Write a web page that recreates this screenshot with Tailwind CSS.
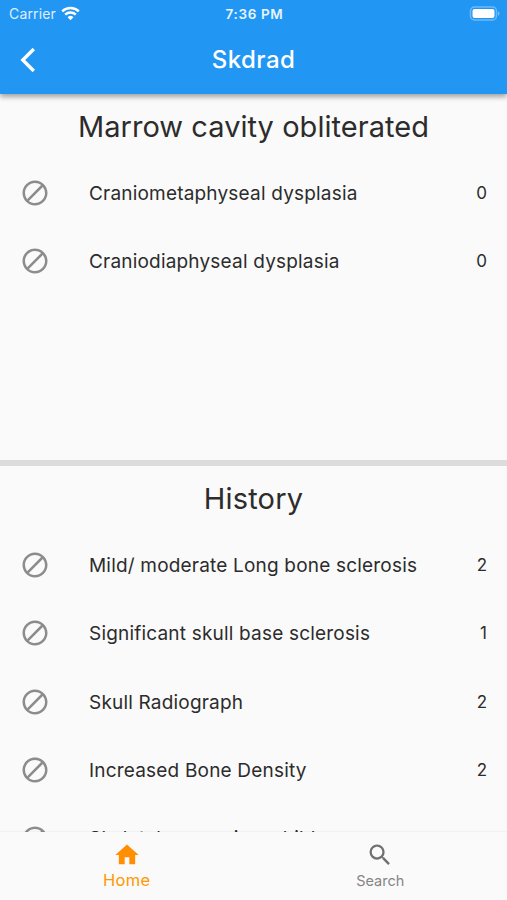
<!DOCTYPE html>
<html lang="en"><head><meta charset="utf-8"><title>Skdrad</title>
<script src="https://cdn.jsdelivr.net/npm/@tailwindcss/browser@4"></script></head>
<body class="bg-[#fafafa]">
<svg class="hidden"><symbol id="block" viewBox="0 0 24 24"><path d="M12 2C6.48 2 2 6.48 2 12s4.48 10 10 10 10-4.48 10-10S17.52 2 12 2zM4 12c0-4.42 3.58-8 8-8 1.85 0 3.55.63 4.9 1.69L5.69 16.9A7.9 7.9 0 0 1 4 12zm8 8c-1.85 0-3.55-.63-4.9-1.69L18.31 7.1A7.9 7.9 0 0 1 20 12c0 4.42-3.58 8-8 8z"/></symbol></svg>
<div class="w-[507px] h-[900px] flex flex-col overflow-hidden bg-[#fafafa] font-['Inter',sans-serif] text-[#2c2c2c]">
<header class="relative z-10 h-[94px] shrink-0 bg-[#2196f3] text-white shadow-[0_3px_5px_rgba(0,0,0,0.35)]">
<div class="h-[26px] grid grid-cols-3 items-center pl-[9px] pr-[7px] text-[14px]">
<div class="flex items-center gap-[5px] text-white/85"><span class="tracking-[0.15px]">Carrier</span>
<svg class="w-[19px] h-[15px]" viewBox="0 0 19 15" fill="none" stroke="white" stroke-width="2.5"><path d="M1.2 5.3a12 12 0 0 1 16.6 0M4.2 8.6a7.7 7.7 0 0 1 10.6 0"/><path d="M9.5 14.2 6.6 11.2a4.2 4.2 0 0 1 5.8 0z" fill="white" stroke="none"/></svg></div>
<div class="text-center font-semibold text-[13.5px] tracking-[0.65px] text-white/90 pt-[2px]">7:36 PM</div>
<div class="flex justify-end"><svg class="w-[31px] h-[15px]" viewBox="0 0 31 15"><rect x="1.5" y="1" width="26" height="13" rx="4" fill="none" stroke="white" stroke-opacity=".35" stroke-width="1.5"/><rect x="3.5" y="3" width="22" height="9" rx="2" fill="white"/><path d="M29 5q3 2.5 0 5z" fill="white" fill-opacity=".4"/></svg></div>
</div>
<div class="h-[68px] grid grid-cols-[80px_1fr_80px] items-center">
<svg class="w-4 h-[25px] ml-5" viewBox="0 0 16 25" fill="none" stroke="white" stroke-width="3.4"><path d="M13.8 1 2.8 12 13.8 23"/></svg>
<h1 class="text-center text-[24px] font-medium tracking-[0.45px]">Skdrad</h1></div>
</header>
<section class="h-[366px] shrink-0">
<h2 class="h-[65px] pt-px flex items-center justify-center text-[29px] tracking-[0.04px]">Marrow cavity obliterated</h2>
<div class="h-[68.5px] flex items-center px-5"><svg class="size-[30px] mr-[39px] mb-px fill-[#8c8c8c]"><use href="#block"/></svg><span class="flex-1 text-[19px] pt-px tracking-[0.19px]">Craniometaphyseal dysplasia</span><span class="text-[17px]">0</span></div>
<div class="h-[68.5px] flex items-center px-5"><svg class="size-[30px] mr-[39px] mb-px fill-[#8c8c8c]"><use href="#block"/></svg><span class="flex-1 text-[19px] pt-px tracking-[0.19px]">Craniodiaphyseal dysplasia</span><span class="text-[17px]">0</span></div>
</section>
<div class="h-[6px] shrink-0 bg-[#dcdcdc]"></div>
<section class="h-[366px] shrink-0 overflow-hidden">
<h2 class="h-[65px] pt-px flex items-center justify-center text-[29px] tracking-[0.2px]">History</h2>
<div class="h-[68.5px] flex items-center px-5"><svg class="size-[30px] mr-[39px] mb-px fill-[#8c8c8c]"><use href="#block"/></svg><span class="flex-1 text-[19px] pt-px tracking-[0.19px]">Mild/ moderate Long bone sclerosis</span><span class="text-[17px]">2</span></div>
<div class="h-[68.5px] flex items-center px-5"><svg class="size-[30px] mr-[39px] mb-px fill-[#8c8c8c]"><use href="#block"/></svg><span class="flex-1 text-[19px] pt-px tracking-[0.19px]">Significant skull base sclerosis</span><span class="text-[17px]">1</span></div>
<div class="h-[68.5px] flex items-center px-5"><svg class="size-[30px] mr-[39px] mb-px fill-[#8c8c8c]"><use href="#block"/></svg><span class="flex-1 text-[19px] pt-px tracking-[0.19px]">Skull Radiograph</span><span class="text-[17px]">2</span></div>
<div class="h-[68.5px] flex items-center px-5"><svg class="size-[30px] mr-[39px] mb-px fill-[#8c8c8c]"><use href="#block"/></svg><span class="flex-1 text-[19px] pt-px tracking-[0.19px]">Increased Bone Density</span><span class="text-[17px]">2</span></div>
<div class="h-[68.5px] flex items-center px-5"><svg class="size-[30px] mr-[39px] mb-px fill-[#8c8c8c]"><use href="#block"/></svg><span class="flex-1 text-[19px] pb-px tracking-[0.19px]">Skeletal survey in a child</span></div>
</section>
<nav class="flex-1 grid grid-cols-2 bg-[#fafafa] shadow-[0_-1px_1px_rgba(0,0,0,0.03)]">
<div class="flex flex-col items-center text-[#ff9800] pt-[9px]"><svg class="size-7 fill-[#ff8f00]" viewBox="0 0 24 24"><path d="M10 20v-6h4v6h5v-8h3L12 3 2 12h3v8z"/></svg><span class="text-[16.5px] leading-[22px] tracking-[0.35px]">Home</span></div>
<div class="flex flex-col items-center text-[#858585] pt-[9px]"><svg class="size-7 fill-[#707070]" viewBox="0 0 24 24"><path d="M15.5 14h-.79l-.28-.27A6.47 6.47 0 0 0 16 9.5 6.5 6.5 0 1 0 9.5 16c1.61 0 3.09-.59 4.23-1.57l.27.28v.79l5 4.99L20.49 19l-4.99-5zm-6 0C7.01 14 5 11.99 5 9.5S7.01 5 9.5 5 14 7.01 14 9.5 11.99 14 9.5 14z"/></svg><span class="text-[14.5px] leading-[24px]">Search</span></div>
</nav>
</div></body></html>
